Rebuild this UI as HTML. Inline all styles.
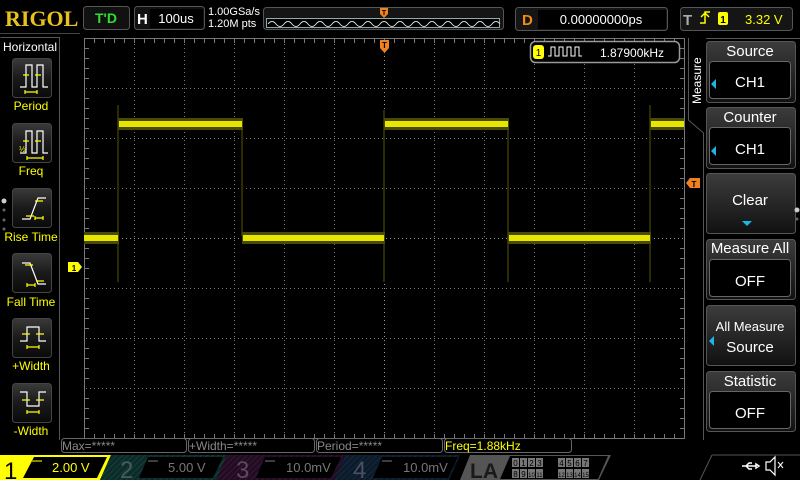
<!DOCTYPE html>
<html><head><meta charset="utf-8"><style>
html,body{margin:0;padding:0;background:#000;width:800px;height:480px;overflow:hidden}
svg{display:block}
text{font-family:"Liberation Sans",sans-serif}
</style></head><body>
<svg width="800" height="480" viewBox="0 0 800 480" xmlns="http://www.w3.org/2000/svg">
<defs>
<linearGradient id="btn" x1="0" y1="0" x2="0" y2="1"><stop offset="0" stop-color="#3a3a3a"/><stop offset="0.5" stop-color="#1a1a1a"/><stop offset="1" stop-color="#0a0a0a"/></linearGradient>
<linearGradient id="rb" x1="0" y1="0" x2="0" y2="1"><stop offset="0" stop-color="#3c3c3c"/><stop offset="1" stop-color="#111"/></linearGradient>
<pattern id="hat2" width="4" height="4" patternUnits="userSpaceOnUse" patternTransform="rotate(45)"><rect width="4" height="4" fill="#0c2a28"/><rect width="1" height="4" fill="#14403c"/></pattern>
<pattern id="hat3" width="4" height="4" patternUnits="userSpaceOnUse" patternTransform="rotate(45)"><rect width="4" height="4" fill="#220c22"/><rect width="1" height="4" fill="#361636"/></pattern>
<pattern id="hat4" width="4" height="4" patternUnits="userSpaceOnUse" patternTransform="rotate(45)"><rect width="4" height="4" fill="#0c1a2a"/><rect width="1" height="4" fill="#15283f"/></pattern>
</defs>
<rect width="800" height="480" fill="#000"/>
<!-- Top bar -->
<text x="5" y="26" fill="#e8c21c" style="font-family:'Liberation Serif',serif;font-weight:bold;font-size:22px">RIGOL</text>
<rect x="83.5" y="6.5" width="46" height="23" rx="3" fill="#111" stroke="#555"/>
<text x="106" y="23" fill="#2de02d" font-weight="bold" font-size="14" text-anchor="middle">T'D</text>
<rect x="134.5" y="6.5" width="70" height="23" rx="3" fill="#111" stroke="#555"/>
<text x="137" y="24" fill="#fff" font-weight="bold" font-size="15">H</text>
<rect x="150" y="9" width="53" height="19" fill="#000"/>
<text x="176" y="23" fill="#fff" font-size="13" text-anchor="middle">100us</text>
<text x="208" y="15" fill="#fff" font-size="11">1.00GSa/s</text>
<text x="208" y="27" fill="#fff" font-size="11">1.20M pts</text>
<rect x="263.5" y="7.5" width="240" height="22" rx="3" fill="#151515" stroke="#555"/>
<rect x="266.5" y="18.5" width="233" height="9" fill="#000" stroke="#8aa"/>
<path d="M268 24 q4 -5 8 0 t8 0 t8 0 t8 0 t8 0 t8 0 t8 0 t8 0 t8 0 t8 0 t8 0 t8 0 t8 0 t8 0 t8 0 t8 0 t8 0 t8 0 t8 0 t8 0 t8 0 t8 0 t8 0 t8 0 t8 0 t8 0 t8 0 t8 0 t8 0" fill="none" stroke="#ddd" stroke-width="1"/>
<path d="M380 8 h8 v6 l-4 4 l-4 -4z" fill="#f08020"/>
<text x="384" y="15" fill="#000" font-size="7" text-anchor="middle" font-weight="bold">T</text>
<rect x="515.5" y="7.5" width="152" height="23" rx="3" fill="#151515" stroke="#555"/>
<text x="522" y="25" fill="#f08c14" font-weight="bold" font-size="15">D</text>
<rect x="538" y="10" width="128" height="19" fill="#000"/>
<text x="601" y="24" fill="#fff" font-size="13" text-anchor="middle">0.00000000ps</text>
<rect x="680.5" y="7.5" width="112" height="23" rx="3" fill="#151515" stroke="#555"/>
<text x="683" y="25" fill="#aaa" font-weight="bold" font-size="15">T</text>
<path d="M700 23 h5 v-11 h5 M701 17 l4 -4 l4 4" fill="none" stroke="#ffff00" stroke-width="1.5"/>
<rect x="718" y="12" width="10" height="13" rx="2" fill="#ffff00"/>
<text x="723" y="23" fill="#000" font-size="10" text-anchor="middle" font-weight="bold">1</text>
<text x="745" y="24" fill="#ffff00" font-size="13">3.32 V</text>
<line x1="0" y1="33.5" x2="80" y2="33.5" stroke="#444"/>
<!-- Grid -->
<g stroke="#7a7a7a" stroke-width="1" stroke-dasharray="1,3">
<line x1="134.5" y1="40" x2="134.5" y2="437"/><line x1="184.5" y1="40" x2="184.5" y2="437"/><line x1="234.5" y1="40" x2="234.5" y2="437"/><line x1="284.5" y1="40" x2="284.5" y2="437"/><line x1="334.5" y1="40" x2="334.5" y2="437"/><line x1="434.5" y1="40" x2="434.5" y2="437"/><line x1="484.5" y1="40" x2="484.5" y2="437"/><line x1="534.5" y1="40" x2="534.5" y2="437"/><line x1="584.5" y1="40" x2="584.5" y2="437"/><line x1="634.5" y1="40" x2="634.5" y2="437"/>
<line x1="86" y1="88.5" x2="684" y2="88.5"/><line x1="86" y1="138.5" x2="684" y2="138.5"/><line x1="86" y1="188.5" x2="684" y2="188.5"/><line x1="86" y1="288.5" x2="684" y2="288.5"/><line x1="86" y1="338.5" x2="684" y2="338.5"/><line x1="86" y1="388.5" x2="684" y2="388.5"/>
</g>
<g stroke="#9a9a9a" stroke-dasharray="1,3"><line x1="384.5" y1="40" x2="384.5" y2="437"/><line x1="86" y1="238.5" x2="684" y2="238.5"/></g>
<rect x="84.5" y="38.5" width="600" height="400" fill="none" stroke="#777"/>
<g stroke="#777">
<path d="M94.5 38v5M104.5 38v5M114.5 38v5M124.5 38v5M134.5 38v5M144.5 38v5M154.5 38v5M164.5 38v5M174.5 38v5M184.5 38v5M194.5 38v5M204.5 38v5M214.5 38v5M224.5 38v5M234.5 38v5M244.5 38v5M254.5 38v5M264.5 38v5M274.5 38v5M284.5 38v5M294.5 38v5M304.5 38v5M314.5 38v5M324.5 38v5M334.5 38v5M344.5 38v5M354.5 38v5M364.5 38v5M374.5 38v5M384.5 38v5M394.5 38v5M404.5 38v5M414.5 38v5M424.5 38v5M434.5 38v5M444.5 38v5M454.5 38v5M464.5 38v5M474.5 38v5M484.5 38v5M494.5 38v5M504.5 38v5M514.5 38v5M524.5 38v5M534.5 38v5M544.5 38v5M554.5 38v5M564.5 38v5M574.5 38v5M584.5 38v5M594.5 38v5M604.5 38v5M614.5 38v5M624.5 38v5M634.5 38v5M644.5 38v5M654.5 38v5M664.5 38v5M674.5 38v5"/>
<path d="M94.5 434v5M104.5 434v5M114.5 434v5M124.5 434v5M134.5 434v5M144.5 434v5M154.5 434v5M164.5 434v5M174.5 434v5M184.5 434v5M194.5 434v5M204.5 434v5M214.5 434v5M224.5 434v5M234.5 434v5M244.5 434v5M254.5 434v5M264.5 434v5M274.5 434v5M284.5 434v5M294.5 434v5M304.5 434v5M314.5 434v5M324.5 434v5M334.5 434v5M344.5 434v5M354.5 434v5M364.5 434v5M374.5 434v5M384.5 434v5M394.5 434v5M404.5 434v5M414.5 434v5M424.5 434v5M434.5 434v5M444.5 434v5M454.5 434v5M464.5 434v5M474.5 434v5M484.5 434v5M494.5 434v5M504.5 434v5M514.5 434v5M524.5 434v5M534.5 434v5M544.5 434v5M554.5 434v5M564.5 434v5M574.5 434v5M584.5 434v5M594.5 434v5M604.5 434v5M614.5 434v5M624.5 434v5M634.5 434v5M644.5 434v5M654.5 434v5M664.5 434v5M674.5 434v5"/>
<path d="M84 48.5h5M84 58.5h5M84 68.5h5M84 78.5h5M84 98.5h5M84 108.5h5M84 118.5h5M84 128.5h5M84 148.5h5M84 158.5h5M84 168.5h5M84 178.5h5M84 198.5h5M84 208.5h5M84 218.5h5M84 228.5h5M84 248.5h5M84 258.5h5M84 268.5h5M84 278.5h5M84 298.5h5M84 308.5h5M84 318.5h5M84 328.5h5M84 348.5h5M84 358.5h5M84 368.5h5M84 378.5h5M84 398.5h5M84 408.5h5M84 418.5h5M84 428.5h5"/>
<path d="M680 48.5h5M680 58.5h5M680 68.5h5M680 78.5h5M680 98.5h5M680 108.5h5M680 118.5h5M680 128.5h5M680 148.5h5M680 158.5h5M680 168.5h5M680 178.5h5M680 198.5h5M680 208.5h5M680 218.5h5M680 228.5h5M680 248.5h5M680 258.5h5M680 268.5h5M680 278.5h5M680 298.5h5M680 308.5h5M680 318.5h5M680 328.5h5M680 348.5h5M680 358.5h5M680 368.5h5M680 378.5h5M680 398.5h5M680 408.5h5M680 418.5h5M680 428.5h5"/>
</g>
<!-- Waveform -->
<g stroke="#2c2c00" stroke-width="2">
<line x1="118" y1="105" x2="118" y2="282"/><line x1="242" y1="128" x2="242" y2="236"/><line x1="384" y1="110" x2="384" y2="282"/><line x1="508" y1="128" x2="508" y2="282"/><line x1="650" y1="105" x2="650" y2="282"/>
</g>
<g fill="#4a4a08">
<rect x="84" y="232" width="35" height="12"/><rect x="118" y="118" width="125" height="12"/><rect x="242" y="232" width="143" height="12"/><rect x="384" y="118" width="125" height="12"/><rect x="508" y="232" width="143" height="12"/><rect x="650" y="118" width="34" height="12"/>
</g>
<g fill="#e6e600">
<rect x="84" y="235" width="34" height="6"/><rect x="119" y="121" width="123" height="6"/><rect x="243" y="235" width="141" height="6"/><rect x="385" y="121" width="123" height="6"/><rect x="509" y="235" width="141" height="6"/><rect x="651" y="121" width="33" height="6"/>
</g>
<!-- markers -->
<path d="M380 40 h9 v8 l-4.5 5 l-4.5 -5z" fill="#f08020"/><text x="384.5" y="48" fill="#000" font-size="8" text-anchor="middle" font-weight="bold">T</text>
<path d="M68 262 h10 l4 5 l-4 5 h-10z" fill="#ffff00"/><text x="74" y="271" fill="#000" font-size="8" text-anchor="middle" font-weight="bold">1</text>
<path d="M700 178 h-10 l-4 5 l4 5 h10z" fill="#f08020"/><text x="694" y="187" fill="#000" font-size="8" text-anchor="middle" font-weight="bold">T</text>
<!-- counter box -->
<rect x="530.5" y="41.5" width="149" height="21" rx="5" fill="#000" stroke="#999" stroke-width="1.5"/>
<rect x="533" y="45" width="11" height="14" rx="3" fill="#ffff00"/><text x="538.5" y="56" fill="#000" font-size="10" text-anchor="middle">1</text>
<path d="M548 56 h3 v-9 h4 v9 h4 v-9 h4 v9 h4 v-9 h4 v9 h4 v-9 h4 v9 h3" fill="none" stroke="#fff"/>
<text x="600" y="57" fill="#fff" font-size="12">1.87900kHz</text>
<!-- Left panel -->
<path d="M0.5 37.5 H59.5 V440" fill="none" stroke="#555"/>
<text x="3" y="51" fill="#fff" font-size="12">Horizontal</text>
<g fill="url(#btn)" stroke="#444">
<rect x="12.5" y="58.5" width="39" height="39" rx="3"/><rect x="12.5" y="123.5" width="39" height="39" rx="3"/><rect x="12.5" y="188.5" width="39" height="39" rx="3"/><rect x="12.5" y="253.5" width="39" height="39" rx="3"/><rect x="12.5" y="318.5" width="39" height="39" rx="3"/><rect x="12.5" y="383.5" width="39" height="39" rx="3"/>
</g>
<g fill="none" stroke="#fff" stroke-width="1.2">
<path d="M20 87 h6 v-22 h6 v22 h5 v-22 h6 v22 h5"/>
<path d="M20 153 h6 v-22 h6 v22 h5 v-22 h6 v22 h5"/>
<path d="M22 219 h8 l8 -21 h8"/>
<path d="M22 263 h8 l8 21 h8"/>
<path d="M20 341 h7 v-14 h12 v14 h7"/>
<path d="M20 392 h7 v14 h12 v-14 h7"/>
</g>
<g fill="none" stroke="#ffff00" stroke-width="1.2">
<path d="M23 75h6M35 75h6M25 92h12M25 90v4M37 90v4"/>
<path d="M23 141h6M35 141h6M27 158h16M27 156v4M43 156v4"/>
<path d="M26 216h8M35 201h8M35 218h8M35 216v4M43 216v4"/>
<path d="M25 265h8M36 281h8M27 285h8M27 283v4M35 283v4"/>
<path d="M22 334h8M36 334h8M27 347h12M27 345v4M39 345v4"/>
<path d="M22 400h8M36 400h8M27 412h12M27 410v4M39 410v4"/>
</g>
<text x="19" y="152" fill="#ffff00" font-size="8">½</text>
<g fill="#ffff00" font-size="12" text-anchor="middle">
<text x="31" y="110">Period</text><text x="31" y="175">Freq</text><text x="31" y="241">Rise Time</text><text x="31" y="306">Fall Time</text><text x="31" y="370">+Width</text><text x="31" y="435">-Width</text>
</g>
<circle cx="4" cy="201" r="2.5" fill="#ccc"/><circle cx="4" cy="210" r="1.5" fill="#666"/><circle cx="4" cy="220" r="1.5" fill="#666"/><circle cx="4" cy="229" r="1.5" fill="#666"/>
<!-- Right panel -->
<path d="M688.5 38 V120 L703.5 133 V440" fill="none" stroke="#555"/>
<line x1="706" y1="38.5" x2="800" y2="38.5" stroke="#555"/>
<text transform="translate(701,104) rotate(-90)" fill="#fff" font-size="12">Measure</text>
<g fill="url(#rb)" stroke="#555">
<rect x="706.5" y="41.5" width="89" height="61" rx="3"/><rect x="706.5" y="107.5" width="89" height="61" rx="3"/><rect x="706.5" y="173.5" width="89" height="60" rx="3"/><rect x="706.5" y="239.5" width="89" height="60" rx="3"/><rect x="706.5" y="305.5" width="89" height="60" rx="3"/><rect x="706.5" y="371.5" width="89" height="60" rx="3"/>
</g>
<g fill="#000" stroke="#666">
<rect x="709.5" y="61.5" width="81" height="37" rx="3"/><rect x="709.5" y="127.5" width="81" height="37" rx="3"/><rect x="709.5" y="259.5" width="81" height="37" rx="3"/><rect x="709.5" y="391.5" width="81" height="37" rx="3"/>
</g>
<g fill="#fff" font-size="15" text-anchor="middle">
<text x="750" y="56">Source</text><text x="750" y="87">CH1</text>
<text x="750" y="122">Counter</text><text x="750" y="154">CH1</text>
<text x="750" y="205">Clear</text>
<text x="750" y="253">Measure All</text><text x="750" y="286">OFF</text>
<text x="750" y="331" font-size="13">All Measure</text><text x="750" y="352">Source</text>
<text x="750" y="386">Statistic</text><text x="750" y="418">OFF</text>
</g>
<g fill="#18b8e8">
<path d="M711 84 l5 -5 v10z"/><path d="M711 151 l5 -5 v10z"/><path d="M709 341 l5 -5 v10z"/><path d="M742 221 h10 l-5 5z"/>
</g>
<circle cx="797" cy="210" r="2.5" fill="#ccc"/><circle cx="797" cy="219" r="1.5" fill="#666"/>
<!-- measure bar -->
<g fill="#000" stroke="#666">
<rect x="61.5" y="438.5" width="125" height="14" rx="3"/><rect x="188.5" y="438.5" width="126" height="14" rx="3"/><rect x="316.5" y="438.5" width="126" height="14" rx="3"/><rect x="444.5" y="438.5" width="127" height="14" rx="3"/>
</g>
<g font-size="12" fill="#888">
<text x="62" y="450">Max=*****</text><text x="189" y="450">+Width=*****</text><text x="317" y="450">Period=*****</text><text x="445" y="450" fill="#ffff00">Freq=1.88kHz</text>
</g>
<!-- channel bar -->
<path d="M0 455 H111 L100 480 H0z" fill="#ffff00"/>
<path d="M34 457 H107 L97 478 H23z" fill="#000"/>
<text x="4" y="479" fill="#000" font-size="24">1</text>
<text x="32" y="463" fill="#ffff00" font-size="7">══</text>
<text x="52" y="472" fill="#ffff00" font-size="13">2.00 V</text>
<path d="M111 455 H227 L216 480 H100z" fill="url(#hat2)"/>
<path d="M148 457 H223 L213 478 H139z" fill="#000"/>
<text x="120" y="478" fill="#4a5a5a" font-size="24">2</text>
<text x="148" y="463" fill="#777" font-size="7">══</text><text x="168" y="472" fill="#777" font-size="13">5.00 V</text>
<path d="M227 455 H345 L334 480 H216z" fill="url(#hat3)"/>
<path d="M265 457 H341 L331 478 H256z" fill="#000"/>
<text x="236" y="478" fill="#5a4a5a" font-size="24">3</text>
<text x="265" y="463" fill="#777" font-size="7">══</text><text x="286" y="472" fill="#777" font-size="13">10.0mV</text>
<path d="M345 455 H460 L449 480 H334z" fill="url(#hat4)"/>
<path d="M382 457 H458 L448 478 H373z" fill="#000"/>
<text x="353" y="478" fill="#4a5060" font-size="24">4</text>
<text x="382" y="463" fill="#777" font-size="7">══</text><text x="403" y="472" fill="#777" font-size="13">10.0mV</text>
<path d="M470 455 H611 L599 480 H460z" fill="#555"/>
<path d="M510 456 H608 L598 479 H500z" fill="#000"/>
<text x="470" y="478" fill="#1a1a1a" font-size="21" font-weight="bold">LA</text>
<g fill="#777">
<rect x="512" y="458" width="7" height="9"/><rect x="520" y="458" width="7" height="9"/><rect x="528" y="458" width="7" height="9"/><rect x="536" y="458" width="7" height="9"/>
<rect x="558" y="458" width="7" height="9"/><rect x="566" y="458" width="7" height="9"/><rect x="574" y="458" width="7" height="9"/><rect x="582" y="458" width="7" height="9"/>
<rect x="512" y="469" width="7" height="9"/><rect x="520" y="469" width="7" height="9"/><rect x="528" y="469" width="7" height="9"/><rect x="536" y="469" width="7" height="9"/>
<rect x="558" y="469" width="7" height="9"/><rect x="566" y="469" width="7" height="9"/><rect x="574" y="469" width="7" height="9"/><rect x="582" y="469" width="7" height="9"/>
</g>
<g fill="#000" font-size="8" text-anchor="middle">
<text x="515.5" y="466">0</text><text x="523.5" y="466">1</text><text x="531.5" y="466">2</text><text x="539.5" y="466">3</text>
<text x="561.5" y="466">4</text><text x="569.5" y="466">5</text><text x="577.5" y="466">6</text><text x="585.5" y="466">7</text>
<text x="515.5" y="477">8</text><text x="523.5" y="477">9</text><text x="531.5" y="477" font-size="6">10</text><text x="539.5" y="477" font-size="6">11</text>
<text x="561.5" y="477" font-size="6">12</text><text x="569.5" y="477" font-size="6">13</text><text x="577.5" y="477" font-size="6">14</text><text x="585.5" y="477" font-size="6">15</text>
</g>
<path d="M712 455 H800 M712 455 L700 480" stroke="#555" fill="none"/>
<path d="M742 466 h14 M746 466 l3 -3 h3 M746 466 l3 3 h3 M756 464 l3 2 l-3 2z" stroke="#fff" fill="none" stroke-width="1.5"/>
<path d="M766 462 h4 l5 -5 v18 l-5 -5 h-4z" stroke="#fff" fill="none" stroke-width="1.2"/>
<path d="M778 462 l5 6 M783 462 l-5 6" stroke="#fff" stroke-width="1"/>
</svg>
</body></html>
